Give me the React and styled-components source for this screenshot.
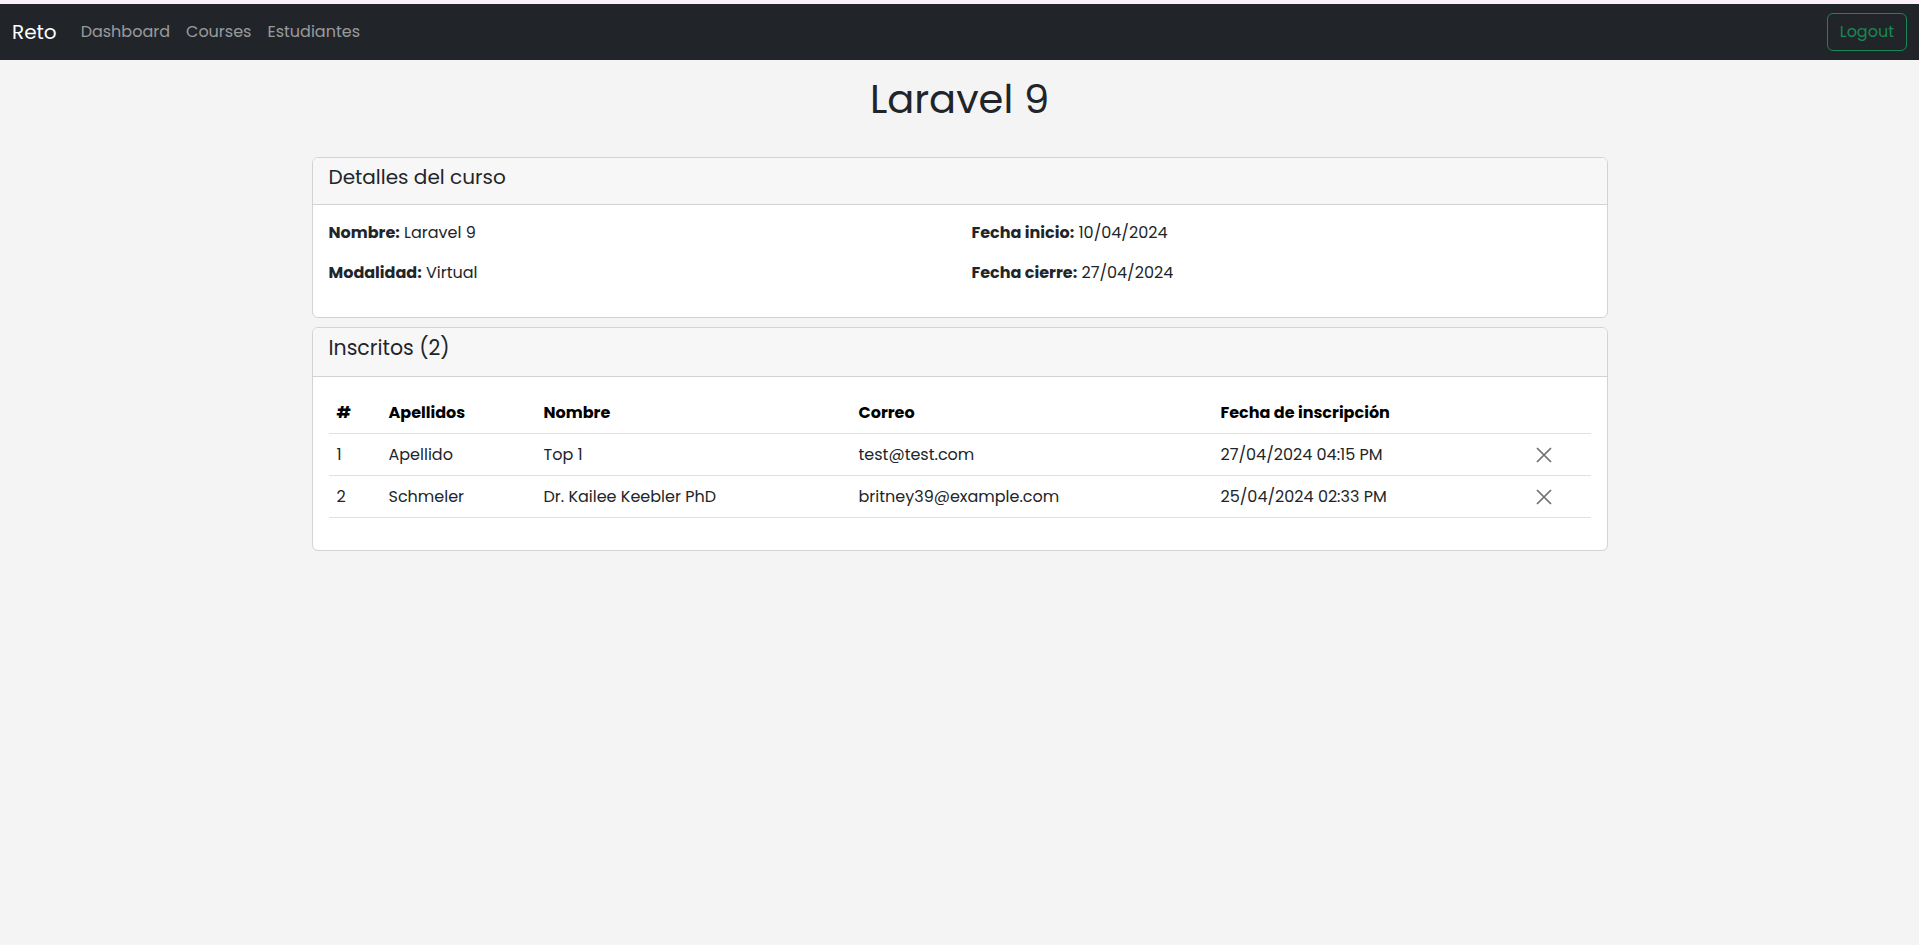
import styled, { createGlobalStyle } from 'styled-components'

const GlobalStyle = createGlobalStyle`
  * { box-sizing: border-box; }
  body {
    margin: 0;
    background: #f4f4f4;
    color: #212529;
    font-family: "Poppins", "Inter", "Noto Sans", sans-serif;
    font-size: 16px;
    line-height: 1.5;
  }
`

const TopStrip = styled.div`
  height: 4px;
  background: #fcf0fb;
`

const Navbar = styled.nav`
  height: 56px;
  background: #212529;
  display: flex;
  align-items: center;
  padding: 0 12px;
`

const Brand = styled.a`
  color: #fff;
  font-size: 20px;
  text-decoration: none;
  margin-right: 16px;
`

const NavList = styled.ul`
  display: flex;
  list-style: none;
  margin: 0;
  padding: 0;
  flex: 1;
`

const NavLink = styled.a`
  display: block;
  padding: 8px;
  font-size: 16px;
  color: rgba(255, 255, 255, 0.55);
  text-decoration: none;
`

const OutlineButton = styled.button`
  font-family: inherit;
  font-size: 16px;
  line-height: 24px;
  padding: 6px 12px;
  background: transparent;
  color: #198754;
  border: 1px solid #198754;
  border-radius: 6px;
`

const Container = styled.main`
  max-width: 1320px;
  margin: 0 auto;
  padding: 0 12px;
`

const Title = styled.h1`
  text-align: center;
  font-size: 40px;
  font-weight: 400;
  line-height: 48px;
  margin: 15px 0 34px;
`

const Card = styled.section`
  background: #fff;
  border: 1px solid #d3d3d3;
  border-radius: 6px;
  margin-bottom: 9px;
  overflow: hidden;
`

const CardHeader = styled.header`
  background: #f7f7f7;
  border-bottom: 1px solid #d3d3d3;
  padding: ${p => (p.$tall ? '8px' : '7px')} 16px ${p => (p.$tall ? '16px' : '15px')};
  font-size: ${p => (p.$tall ? '20.5px' : '20px')};
  line-height: 24px;
`

const CardBody = styled.div`
  padding: 16px;
`

const DetailGrid = styled.div`
  display: grid;
  grid-template-columns: 1fr 1fr;
  column-gap: 24px;
`

const Detail = styled.p`
  margin: 0 0 16px;
  line-height: 24px;

  b {
    font-weight: 700;
  }
`

const Table = styled.table`
  width: 100%;
  table-layout: fixed;
  border-collapse: collapse;
  margin-bottom: 16px;

  th, td {
    text-align: left;
    padding: 8px;
    line-height: 24px;
    border-bottom: 1px solid #dee2e6;
    vertical-align: middle;
    white-space: nowrap;
  }

  th {
    font-weight: 700;
    color: #000;
  }

  td {
    padding-top: 9px;
  }
`

const RemoveButton = styled.button`
  display: flex;
  padding: 0;
  border: 0;
  background: none;
  color: #707070;
`

const CloseIcon = () => (
  <svg width="16" height="16" viewBox="0 0 16 16" fill="none" stroke="currentColor" strokeWidth="1.7">
    <path d="M1 1 15 15M15 1 1 15" />
  </svg>
)

const columns = [52, 155, 315, 362, 315]

const students = [
  { id: 1, last: 'Apellido', name: 'Top 1', email: 'test@test.com', date: '27/04/2024 04:15 PM' },
  { id: 2, last: 'Schmeler', name: 'Dr. Kailee Keebler PhD', email: 'britney39@example.com', date: '25/04/2024 02:33 PM' },
]

export default function App() {
  return (
    <>
      <GlobalStyle />
      <TopStrip />
      <Navbar>
        <Brand href="#">Reto</Brand>
        <NavList>
          <li><NavLink href="#">Dashboard</NavLink></li>
          <li><NavLink href="#">Courses</NavLink></li>
          <li><NavLink href="#">Estudiantes</NavLink></li>
        </NavList>
        <OutlineButton>Logout</OutlineButton>
      </Navbar>

      <Container>
        <Title>Laravel 9</Title>

        <Card>
          <CardHeader>Detalles del curso</CardHeader>
          <CardBody>
            <DetailGrid>
              <div>
                <Detail><b>Nombre:</b> Laravel 9</Detail>
                <Detail><b>Modalidad:</b> Virtual</Detail>
              </div>
              <div>
                <Detail><b>Fecha inicio:</b> 10/04/2024</Detail>
                <Detail><b>Fecha cierre:</b> 27/04/2024</Detail>
              </div>
            </DetailGrid>
          </CardBody>
        </Card>

        <Card>
          <CardHeader $tall>Inscritos (2)</CardHeader>
          <CardBody>
            <Table>
              <colgroup>
                {columns.map((w, i) => <col key={i} style={{ width: w }} />)}
                <col />
              </colgroup>
              <thead>
                <tr>
                  <th>#</th>
                  <th>Apellidos</th>
                  <th>Nombre</th>
                  <th>Correo</th>
                  <th>Fecha de inscripción</th>
                  <th></th>
                </tr>
              </thead>
              <tbody>
                {students.map(s => (
                  <tr key={s.id}>
                    <td>{s.id}</td>
                    <td>{s.last}</td>
                    <td>{s.name}</td>
                    <td>{s.email}</td>
                    <td>{s.date}</td>
                    <td>
                      <RemoveButton aria-label="Eliminar"><CloseIcon /></RemoveButton>
                    </td>
                  </tr>
                ))}
              </tbody>
            </Table>
          </CardBody>
        </Card>
      </Container>
    </>
  )
}
